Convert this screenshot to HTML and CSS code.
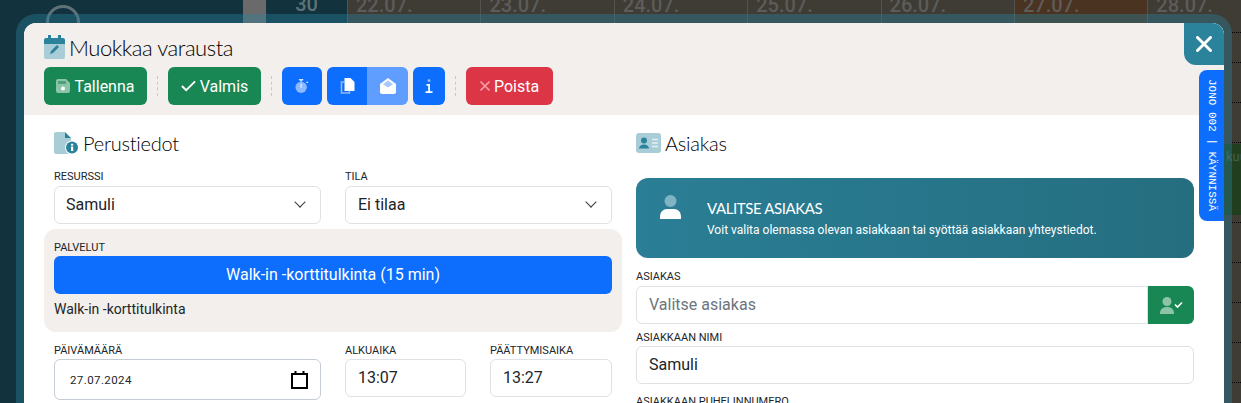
FILE: index.html
```html
<!DOCTYPE html>
<html lang="en">
<head>
  <meta charset="UTF-8" />
  <title>Muokkaa varausta</title>
  <link rel="stylesheet" href="styles.css">
</head>
<body>

  <!-- calendar behind the dialog -->
  <div class="calendar">
    <div class="cal-side"><span class="cal-search"></span></div>
    <div class="cal-gray"></div>
    <div class="cal-week">30</div>
    <div class="cal-days">
      <div class="cal-day">22.07.</div>
      <div class="cal-day">23.07.</div>
      <div class="cal-day">24.07.</div>
      <div class="cal-day">25.07.</div>
      <div class="cal-day">26.07.</div>
      <div class="cal-day cal-today">27.07.</div>
      <div class="cal-day">28.07.</div>
    </div>
  </div>
  <div class="cal-lines"></div>
  <div class="cal-event">kuu</div>

  <div class="frame">
    <div class="modal">
      <header class="modal-head">
        <h1 class="title">
          <svg class="title-icon" viewBox="0 0 21 24">
            <path fill="#a8cdd7" d="M0 8h21v14a2 2 0 0 1-2 2H2a2 2 0 0 1-2-2z"/>
            <path fill="#2a829b" d="M2 3h2V0h3v3h7V0h3v3h2a2 2 0 0 1 2 2v4H0V5a2 2 0 0 1 2-2z"/>
            <path fill="#2a829b" d="M6 19l1-3 6-6 2 2-6 6z"/>
          </svg>
          Muokkaa varausta
        </h1>
        <div class="toolbar">
          <button class="btn btn-green btn-save">
            <svg class="ico" viewBox="0 0 14 14"><path fill="#8cc4a8" d="M2 0h8l4 4v8a2 2 0 0 1-2 2H2a2 2 0 0 1-2-2V2a2 2 0 0 1 2-2z"/><rect fill="#4fa07a" x="2" y="2" width="8" height="3"/><circle fill="#fff" cx="7" cy="9.5" r="2"/></svg>
            Tallenna
          </button>
          <span class="sep"></span>
          <button class="btn btn-green btn-done">
            <svg class="ico ico-check" viewBox="0 0 16 12"><path fill="none" stroke="#fff" stroke-width="2" d="M1 6l4.5 4.5L15 1"/></svg>
            Valmis
          </button>
          <span class="sep"></span>
          <button class="btn btn-blue btn-timer">
            <svg class="ico" viewBox="0 0 16 16"><circle fill="#8db9fe" cx="7" cy="9.5" r="6.5"/><rect fill="#cfe2ff" x="4.5" y="0" width="5" height="1.6"/><rect fill="#cfe2ff" x="6" y="1" width="2" height="2"/><rect fill="#fff" x="6.4" y="5.5" width="1.2" height="4.5"/><rect fill="#cfe2ff" x="13" y="3" width="2" height="1.6"/></svg>
          </button>
          <div class="btn-group">
            <button class="btn btn-blue btn-copy">
              <svg class="ico ico-copy" viewBox="0 0 14 16"><path fill="none" stroke="#8db9fe" stroke-width="1.6" d="M4 4H1v11h8v-2"/><path fill="#fff" d="M4 0h6l4 4v9H4z"/></svg>
            </button>
            <button class="btn btn-light btn-mail">
              <svg class="ico ico-mail" viewBox="0 0 16 16"><path fill="#fff" d="M8 0l8 6v8a2 2 0 0 1-2 2H2a2 2 0 0 1-2-2V6z"/><path fill="#a8c9fe" d="M3 6.2L8 2.4l5 3.8-5 3.4z"/></svg>
            </button>
          </div>
          <button class="btn btn-blue btn-info">
            <svg class="ico ico-info" viewBox="0 0 8 14"><circle fill="#8db9fe" cx="4" cy="1.5" r="1.5"/><path fill="#fff" d="M1.500 5h3.500v7.300h2.500v1.700H.5v-1.700h2.700V6.700H1.500z"/></svg>
          </button>
          <span class="sep"></span>
          <button class="btn btn-red btn-delete">
            <svg class="ico ico-x" viewBox="0 0 10 10"><path stroke="#f09aa4" stroke-width="1.6" d="M.5.5l9 9M9.500.5l-9 9"/></svg>
            Poista
          </button>
        </div>
      </header>

      <div class="modal-body">
        <section class="col">
          <h2 class="col-title col-title-info">
            <svg class="file-icon" viewBox="0 0 25 22">
              <path fill="#a8cdd7" d="M2 0h9v6h6v16H2a2 2 0 0 1-2-2V2a2 2 0 0 1 2-2z"/>
              <path fill="#2a829b" d="M11 0l6 6h-6z"/>
              <circle fill="#fff" cx="18" cy="15.500" r="7"/>
              <circle fill="#2a829b" cx="18" cy="15.500" r="6"/>
              <rect fill="#fff" x="17" y="14.500" width="2.200" height="4.500"/>
              <rect fill="#fff" x="17" y="11.800" width="2.200" height="1.800"/>
            </svg>
            Perustiedot
          </h2>
          <div class="row row-two">
            <div class="field">
              <label>Resurssi</label>
              <div class="control select">Samuli<span class="chevron"></span></div>
            </div>
            <div class="field">
              <label>Tila</label>
              <div class="control select">Ei tilaa<span class="chevron"></span></div>
            </div>
          </div>
          <div class="services">
            <label>Palvelut</label>
            <button class="service-btn">Walk-in -korttitulkinta (15 min)</button>
            <p class="service-name">Walk-in -korttitulkinta</p>
          </div>
          <div class="row row-time">
            <div class="field">
              <label>Päivämäärä</label>
              <div class="control date">
                27.07.2024
                <svg class="date-icon" viewBox="0 0 17 18"><path fill="none" stroke="#000" stroke-width="2" d="M1 3h15v14H1z"/><path stroke="#000" stroke-width="2" d="M4.500 0v3M12.500 0v3"/></svg>
              </div>
            </div>
            <div class="field">
              <label>Alkuaika</label>
              <div class="control">13:07</div>
            </div>
            <div class="field">
              <label>Päättymisaika</label>
              <div class="control">13:27</div>
            </div>
          </div>
        </section>

        <section class="col">
          <h2 class="col-title">
            <svg class="card-icon" viewBox="0 0 25 20">
              <rect fill="#a8cdd7" width="25" height="20" rx="3"/>
              <circle fill="#2a829b" cx="8" cy="7.500" r="3"/>
              <path fill="#2a829b" d="M3 15.500a5 4 0 0 1 10 0z"/>
              <path stroke="#e4f0f3" stroke-width="1.300" d="M16 6.500h6M16 10h6M16 13.500h6"/>
            </svg>
            Asiakas
          </h2>
          <div class="banner">
            <svg class="banner-icon" viewBox="0 0 21 24">
              <circle fill="#80b4c3" cx="10.500" cy="6" r="6"/>
              <path fill="#fff" d="M0 24v-3a7 7 0 0 1 7-7h7a7 7 0 0 1 7 7v3z"/>
            </svg>
            <div>
              <div class="banner-title">Valitse asiakas</div>
              <div class="banner-text">Voit valita olemassa olevan asiakkaan tai syöttää asiakkaan yhteystiedot.</div>
            </div>
          </div>
          <div class="field">
            <label>Asiakas</label>
            <div class="input-group">
              <div class="control placeholder">Valitse asiakas</div>
              <button class="pick-btn">
                <svg class="pick-icon" viewBox="0 0 24 17">
                  <circle fill="#8cc4a8" cx="8" cy="4.500" r="4.500"/>
                  <path fill="#8cc4a8" d="M1 17v-1a6 6 0 0 1 6-6h2a6 6 0 0 1 6 6v1z"/>
                  <path fill="none" stroke="#fff" stroke-width="1.600" d="M16 7.500l2.500 2.500 4.500-4.500"/>
                </svg>
              </button>
            </div>
          </div>
          <div class="field field-tight">
            <label>Asiakkaan nimi</label>
            <div class="control">Samuli</div>
          </div>
          <div class="field field-tight field-phone">
            <label>Asiakkaan puhelinnumero</label>
          </div>
        </section>
      </div>

      <button class="close-btn">
        <svg viewBox="0 0 16 16"><path stroke="#fff" stroke-width="3" stroke-linecap="round" d="M1.500 1.500l13 13M14.500 1.500l-13 13"/></svg>
      </button>
      <div class="queue-tab">JONO 002 | KÄYNNISSÄ</div>
    </div>
  </div>

</body>
</html>
```

FILE: styles.css
```css
* {
  box-sizing: border-box;
}

body {
  margin: 0;
  height: 403px;
  overflow: hidden;
  position: relative;
  background-color: #3f3b35;
  font-family: 'Roboto', sans-serif;
  color: #212529;
}

/* calendar behind */
.calendar {
  display: flex;
  height: 403px;
  font-family: 'Roboto', sans-serif;
  font-weight: 500;
  font-size: 20px;
  color: #5d5c59;
}

.cal-side {
  flex: none;
  width: 243px;
  background-color: #12323e;
  position: relative;
}

.cal-search {
  position: absolute;
  left: 46px;
  top: 5px;
  width: 34px;
  height: 34px;
  border: 3px solid #5f7278;
  border-radius: 50%;
}

.cal-gray {
  flex: none;
  width: 23px;
  background-color: #6a6a6a;
}

.cal-week {
  flex: none;
  width: 81px;
  background-color: #12323e;
  text-align: center;
  line-height: 8px;
  color: #5f7278;
}

.cal-days {
  display: flex;
  flex: 1;
}

.cal-day {
  flex: none;
  width: 133.4px;
  padding-left: 8px;
  line-height: 10px;
  border-left: 1px solid #55534e;
}

.cal-today {
  background-color: #4a3320;
}

.cal-event {
  position: absolute;
  left: 1210px;
  top: 144px;
  width: 31px;
  height: 71px;
  padding: 5px 0 0 16px;
  background-color: #213f1f;
  color: #47604c;
  font-size: 13px;
  overflow: hidden;
}

.cal-lines {
  position: absolute;
  left: 1232px;
  top: 32px;
  width: 9px;
  height: 371px;
  background-image:
    linear-gradient(to bottom, #000 0, #000 1px, transparent 1px),
    linear-gradient(to bottom, #000 0, #000 1px, transparent 1px);
  background-size: 100% 40px, 100% 40px;
  background-position: 0 0, 0 30px;
  background-repeat: no-repeat, repeat-y;
  -webkit-mask-image: repeating-linear-gradient(to right, #000 0, #000 1px, transparent 1px, transparent 2px);
  mask-image: repeating-linear-gradient(to right, #000 0, #000 1px, transparent 1px, transparent 2px);
}

/* dialog */
.frame {
  position: absolute;
  left: 16px;
  top: 14px;
  width: 1216px;
  height: 440px;
  padding: 9px 8px 0;
  border-radius: 20px 20px 0 0;
  background-color: rgba(42, 130, 155, 0.4);
}

.modal {
  position: relative;
  height: 100%;
  background-color: #fff;
  border-radius: 12px 12px 0 0;
}

.modal-head {
  height: 92px;
  padding: 11px 20px 0;
  background-color: #f3efec;
  border-radius: 12px 12px 0 0;
}

.title {
  display: flex;
  align-items: center;
  gap: 4px;
  margin: 0 0 7px;
  height: 26px;
  font-family: 'Lato', sans-serif;
  font-weight: 300;
  font-size: 22px;
  letter-spacing: -0.45px;
  color: #000;
}

.title-icon {
  width: 21px;
  height: 24px;
}

.toolbar {
  display: flex;
  align-items: center;
}

.btn {
  display: flex;
  align-items: center;
  justify-content: center;
  gap: 4px;
  height: 38px;
  padding: 0;
  border: none;
  border-radius: 6px;
  color: #fff;
  font-family: 'Roboto', sans-serif;
  font-size: 16px;
}

.btn-green { background-color: #198754; }
.btn-blue { background-color: #0d6efd; }
.btn-light { background-color: #5f9dfe; }
.btn-red { background-color: #dc3545; }

.btn-save { width: 103px; }
.btn-done { width: 93px; }
.btn-timer { width: 40px; }
.btn-copy { width: 40px; border-radius: 6px 0 0 6px; }
.btn-mail { width: 41px; border-radius: 0 6px 6px 0; }
.btn-info { width: 32px; margin-left: 5px; }
.btn-delete { width: 87px; }

.btn-group {
  display: flex;
  margin-left: 5px;
}

.ico {
  width: 14px;
  height: 14px;
}

.ico-check { width: 15px; height: 12px; }
.ico-copy { width: 15px; height: 16px; }
.ico-mail { width: 16px; height: 16px; }
.ico-info { width: 8px; height: 14px; }
.ico-x { width: 10px; height: 10px; }

.sep {
  width: 1px;
  height: 20px;
  margin: 0 10px;
  border-left: 1px dashed #c9c6c3;
}

.modal-body {
  display: grid;
  grid-template-columns: 578px 558px;
  column-gap: 14px;
  padding: 0 20px;
}

.col-title {
  display: flex;
  align-items: center;
  gap: 4px;
  height: 24px;
  margin: 16px 0 0;
  font-family: 'Lato', sans-serif;
  font-weight: 300;
  font-size: 20px;
  letter-spacing: -0.25px;
  color: #000;
}

.col-title-info {
  padding-left: 10px;
}

.file-icon {
  width: 25px;
  height: 22px;
}

.card-icon {
  width: 25px;
  height: 20px;
}

.row {
  display: grid;
  padding: 0 10px;
  column-gap: 24px;
}

.row-two {
  grid-template-columns: 267px 267px;
  margin-top: 15px;
}

.row-time {
  grid-template-columns: 267px 121px 122px;
  margin-top: 12px;
}

label {
  display: block;
  height: 14px;
  font-size: 11px;
  line-height: 14px;
  text-transform: uppercase;
  color: #212529;
  margin-bottom: 2px;
}

.row-time label {
  margin-bottom: 1px;
}

.control {
  display: flex;
  align-items: center;
  height: 38px;
  padding: 0 12px 2px;
  background-color: #fff;
  border: 1px solid #dee2e6;
  border-radius: 6px;
  font-size: 16px;
}

.select {
  justify-content: space-between;
  padding-left: 11px;
}

.row-two .field + .field .select {
  padding-left: 12px;
}

.chevron {
  width: 8px;
  height: 8px;
  margin: -4px 4px 0 0;
  border-right: 1.6px solid #343a40;
  border-bottom: 1.6px solid #343a40;
  transform: rotate(45deg);
}

.services {
  margin-top: 5px;
  height: 103px;
  padding: 12px 10px 0;
  background-color: #f3efec;
  border-radius: 12px;
}

.services label {
  margin-bottom: 1px;
}

.service-btn {
  display: block;
  width: 100%;
  height: 38px;
  padding: 0 0 2px;
  border: none;
  border-radius: 6px;
  background-color: #0d6efd;
  color: #fff;
  font-family: 'Roboto', sans-serif;
  font-size: 16px;
}

.service-name {
  margin: 6px 0 0;
  font-size: 14px;
  line-height: 19px;
}

.date {
  justify-content: space-between;
  height: 41px;
  padding: 0 12px 0 15px;
  border-color: #c6ccd4;
  font-size: 11.5px;
  letter-spacing: 0.4px;
}

.date-icon {
  width: 17px;
  height: 18px;
}

.banner {
  display: flex;
  align-items: flex-start;
  gap: 26px;
  height: 80px;
  margin: 23px 0 12px;
  padding: 18px 24px 0;
  border-radius: 12px;
  background: linear-gradient(to right, #2a7e95, #256e80);
  color: #fff;
}

.banner-icon {
  width: 21px;
  height: 24px;
  margin-top: -1px;
}

.banner-title {
  font-family: 'Lato', sans-serif;
  font-size: 15px;
  letter-spacing: -0.4px;
  line-height: 24px;
  text-transform: uppercase;
}

.banner-text {
  font-size: 12px;
  line-height: 20px;
}

.input-group {
  display: flex;
}

.input-group .control {
  flex: 1;
  border-radius: 6px 0 0 6px;
}

.placeholder {
  color: #6c757d;
}

.pick-btn {
  display: flex;
  align-items: center;
  justify-content: center;
  width: 46px;
  height: 38px;
  border: none;
  border-radius: 0 6px 6px 0;
  background-color: #198754;
}

.pick-icon {
  width: 24px;
  height: 17px;
}

.field-tight {
  margin-top: 7px;
}

.field-tight label {
  margin-bottom: 1px;
}

.field-phone {
  margin-top: 11px;
}

.close-btn {
  position: absolute;
  right: 0;
  top: 0;
  display: flex;
  align-items: center;
  justify-content: center;
  width: 40px;
  height: 42px;
  border: none;
  border-radius: 0 12px 0 12px;
  background-color: #2a829b;
}

.close-btn svg {
  width: 16px;
  height: 16px;
}

.queue-tab {
  position: absolute;
  right: 0;
  top: 47px;
  width: 25px;
  height: 151px;
  display: flex;
  align-items: center;
  justify-content: center;
  writing-mode: vertical-rl;
  background-color: #0d6efd;
  border-radius: 8px 0 0 8px;
  color: #fff;
  font-family: 'Liberation Mono', monospace;
  font-size: 11px;
}
```
